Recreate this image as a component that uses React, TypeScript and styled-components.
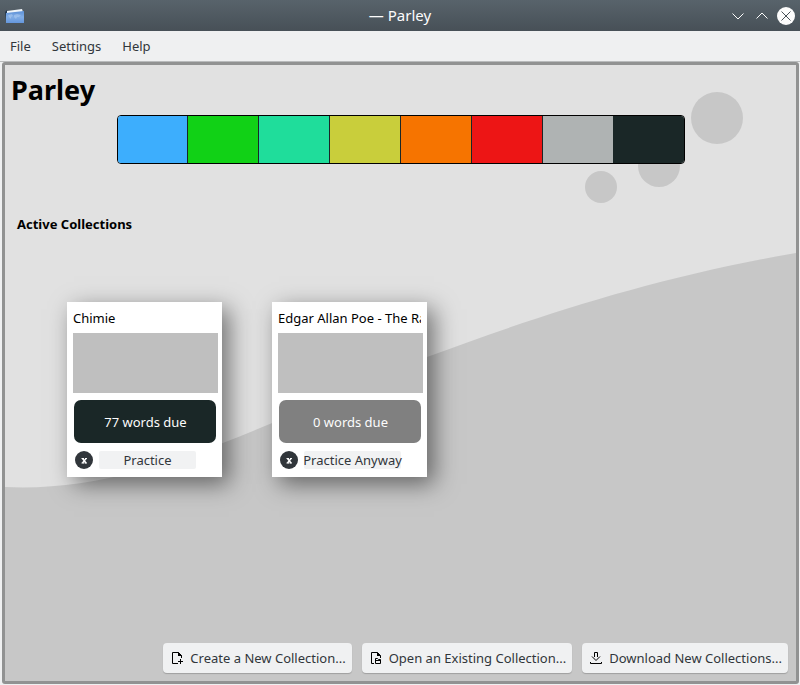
import React from "react";
import styled, { createGlobalStyle } from "styled-components";

const GlobalStyle = createGlobalStyle`
  * { box-sizing: border-box; }
  body {
    margin: 0;
    background: #eff0f1;
    color: #31363b;
    font-family: "Noto Sans", sans-serif;
    font-size: 13px;
    line-height: 18px;
  }
  button { font: inherit; color: inherit; border: 0; padding: 0; margin: 0; cursor: pointer; }
  svg { display: block; flex: none; }
`;

const Window = styled.div`
  display: flex;
  flex-direction: column;
  min-height: 100vh;
`;

const TitleBar = styled.header`
  display: grid;
  grid-template-columns: 1fr auto 1fr;
  align-items: center;
  height: 31px;
  padding: 0 5px;
  background: linear-gradient(#58636b, #475057);
  color: #fcfcfc;
`;

const WindowTitle = styled.div`
  padding-bottom: 2px;
  font-size: 15px;
  line-height: 20px;
`;

const WindowControls = styled.div`
  display: flex;
  justify-content: flex-end;
  gap: 6px;
`;

const ControlButton = styled.button`
  width: 18px;
  height: 18px;
  background: none;
`;

const MenuBar = styled.nav`
  display: flex;
  gap: 1px;
  height: 31px;
  border-bottom: 1px solid #b9bbbc;
`;

const MenuItem = styled.button`
  padding: 0 10px;
  background: none;
`;

const Frame = styled.main`
  position: relative;
  flex: 1;
  display: flex;
  flex-direction: column;
  margin: 0 1px 1px 2px;
  border: 3px solid #919292;
  border-radius: 3px;
  background: #e1e1e1;
  color: #000;
`;

const Backdrop = styled.svg`
  position: absolute;
  inset: 0;
  width: 100%;
  height: 100%;
`;

const Content = styled.div`
  position: relative;
  flex: 1;
  display: flex;
  flex-direction: column;
`;

const Heading = styled.h1`
  margin: 7px 6px 0;
  font-size: 27px;
  line-height: 36px;
  font-weight: 700;
`;

const Legend = styled.div`
  display: flex;
  align-self: center;
  width: 568px;
  max-width: 100%;
  height: 49px;
  margin-top: 7px;
  border: 1px solid #000;
  border-radius: 4px;
  overflow: hidden;
`;

const Swatch = styled.div<{ $color: string }>`
  flex: 1;
  background: ${(p) => p.$color};
  & + & { border-left: 1px solid #1a2727; }
`;

const SectionTitle = styled.h2`
  margin: 51px 12px 0;
  font-size: 13px;
  line-height: 18px;
  font-weight: 700;
`;

const CardList = styled.div`
  display: flex;
  flex-wrap: wrap;
  gap: 50px;
  padding: 69px 62px 50px;
`;

const Card = styled.article`
  width: 155px;
  padding: 7px 5px 8px 6px;
  background: #fff;
  box-shadow: 7px 7px 22px rgba(0, 0, 0, 0.5);
`;

const CardTitle = styled.h3`
  margin: 0 1px 6px 0;
  font-size: 13px;
  line-height: 18px;
  font-weight: 400;
  white-space: nowrap;
  overflow: hidden;
`;

const Thumbnail = styled.div`
  width: 145px;
  height: 60px;
  background: #bfbfbf;
`;

const DueBadge = styled.div<{ $color: string }>`
  margin: 7px 1px 8px;
  padding: 13px 0 12px 1px;
  border-radius: 7px;
  background: ${(p) => p.$color};
  color: #fcfcfc;
  text-align: center;
`;

const CardActions = styled.div`
  display: flex;
  align-items: center;
  gap: 6px;
  padding-left: 2px;
`;

const RemoveButton = styled.button`
  width: 18px;
  height: 18px;
  background: none;
`;

const PracticeButton = styled.button`
  width: 97px;
  height: 18px;
  background: #f1f2f3;
  color: #31363b;
  border-radius: 2px;
  white-space: nowrap;
  display: flex;
  justify-content: center;
`;

const Footer = styled.footer`
  display: flex;
  flex-wrap: wrap;
  justify-content: flex-end;
  gap: 10px;
  margin-top: auto;
  padding: 0 8px 8px;
`;

const ActionButton = styled.button`
  display: flex;
  align-items: center;
  gap: 4px;
  height: 30px;
  padding: 0 6px 0 7px;
  border-radius: 4px;
  background: #f0f1f2;
  box-shadow: 0 1px 1px rgba(0, 0, 0, 0.2);
  color: #31363b;
  white-space: nowrap;
`;

const AppIcon = () => (
  <svg width="20" height="18" viewBox="0 0 20 18" aria-hidden="true">
    <defs>
      <linearGradient id="card" x1="0" y1="0" x2="0" y2="1">
        <stop offset="0" stopColor="#5b8fd6" />
        <stop offset="0.5" stopColor="#82aee6" />
        <stop offset="1" stopColor="#6496dc" />
      </linearGradient>
    </defs>
    <path d="M0 5 2 3 3 15 1 14z" fill="#22384e" />
    <path d="M2 4 17 2 18 5 2 7z" fill="#eef4f9" />
    <path d="M1 6 19 4V16H1z" fill="url(#card)" />
    <path d="M3 8 7 7 8 9 6 10 6 12 4 10zM9 8 12 7 16 8 14 10 12 10 11 12 9 10z" fill="#b4d0f2" opacity="0.5" />
  </svg>
);

const NewIcon = () => (
  <svg width="16" height="16" viewBox="0 0 16 16" fill="none" stroke="#000" aria-hidden="true">
    <path d="M8 13.500H2.500V2.500H8.500L11.500 5.500V8M8.500 2.500V5.500H11.500M10.500 9V14M8 11.500H13" />
    <path d="M8 2 12 6H8z" fill="#000" stroke="none" />
  </svg>
);

const OpenIcon = () => (
  <svg width="16" height="16" viewBox="0 0 16 16" fill="none" stroke="#000" aria-hidden="true">
    <path d="M5 13.500H2.500V2.500H8.500L11.500 5.500V8M6.500 13.500V8.500H8.500L9.500 9.500H11.500V13.500zM6.500 10.500H11.500" />
    <path d="M8 2 12 6H8z" fill="#000" stroke="none" />
  </svg>
);

const DownloadIcon = () => (
  <svg width="16" height="16" viewBox="0 0 16 16" fill="none" stroke="#000" aria-hidden="true">
    <path d="M5.500 7V2.500H8.500V7M3 6.500 7 10.500 11 6.500M1.500 12V13.500H12.500V12" />
  </svg>
);

const RemoveIcon = () => (
  <svg width="18" height="18" viewBox="0 0 18 18" aria-hidden="true">
    <circle cx="9" cy="9" r="9" fill="#31363b" />
    <path d="M7.500 7.500 11 12M11 7.500 7.500 12" stroke="#fff" strokeWidth="1.500" />
    <path d="M6.500 7.500h2.500M10 7.500h2M6.500 12h2.500M9.500 12h2.500" stroke="#fff" />
  </svg>
);

const swatches = ["#3daefd", "#11d116", "#1fdd9b", "#c9ce3b", "#f67400", "#ed1515", "#afb3b3", "#1a2727"];

const collections = [
  { title: "Chimie", due: "77 words due", color: "#1a2727", action: "Practice" },
  { title: "Edgar Allan Poe - The Raven", due: "0 words due", color: "#808080", action: "Practice Anyway" },
];

const actions = [
  { label: "Create a New Collection...", Icon: NewIcon },
  { label: "Open an Existing Collection...", Icon: OpenIcon },
  { label: "Download New Collections...", Icon: DownloadIcon },
];

export default function App() {
  return (
    <Window>
      <GlobalStyle />
      <TitleBar>
        <AppIcon />
        <WindowTitle>— Parley</WindowTitle>
        <WindowControls>
          <ControlButton aria-label="Minimize">
            <svg width="18" height="18" viewBox="0 0 18 18" fill="none" stroke="#fcfcfc">
              <path d="M3.500 6.500 9 12 14.500 6.500" />
            </svg>
          </ControlButton>
          <ControlButton aria-label="Maximize">
            <svg width="18" height="18" viewBox="0 0 18 18" fill="none" stroke="#fcfcfc">
              <path d="M3.500 11.500 9 6 14.500 11.500" />
            </svg>
          </ControlButton>
          <ControlButton aria-label="Close">
            <svg width="18" height="18" viewBox="0 0 18 18">
              <circle cx="9" cy="9" r="9" fill="#fcfcfc" />
              <path d="M4.500 4.500 13.500 13.500M13.500 4.500 4.500 13.500" stroke="#475057" />
            </svg>
          </ControlButton>
        </WindowControls>
      </TitleBar>
      <MenuBar>
        <MenuItem>File</MenuItem>
        <MenuItem>Settings</MenuItem>
        <MenuItem>Help</MenuItem>
      </MenuBar>
      <Frame>
        <Backdrop viewBox="0 0 791 616" preserveAspectRatio="xMinYMin slice" aria-hidden="true">
          <g fill="#c7c7c7">
            <path d="M0 422C130 428 240 368 422 292C530 252 650 212 791 188V616H0z" />
            <circle cx="712" cy="53" r="26" />
            <circle cx="654" cy="101" r="21" />
            <circle cx="596" cy="122" r="16" />
          </g>
        </Backdrop>
        <Content>
          <Heading>Parley</Heading>
          <Legend>
            {swatches.map((color) => (
              <Swatch key={color} $color={color} />
            ))}
          </Legend>
          <SectionTitle>Active Collections</SectionTitle>
          <CardList>
            {collections.map((item) => (
              <Card key={item.title}>
                <CardTitle>{item.title}</CardTitle>
                <Thumbnail />
                <DueBadge $color={item.color}>{item.due}</DueBadge>
                <CardActions>
                  <RemoveButton aria-label={`Remove ${item.title}`}>
                    <RemoveIcon />
                  </RemoveButton>
                  <PracticeButton>{item.action}</PracticeButton>
                </CardActions>
              </Card>
            ))}
          </CardList>
          <Footer>
            {actions.map(({ label, Icon }) => (
              <ActionButton key={label}>
                <Icon />
                {label}
              </ActionButton>
            ))}
          </Footer>
        </Content>
      </Frame>
    </Window>
  );
}
